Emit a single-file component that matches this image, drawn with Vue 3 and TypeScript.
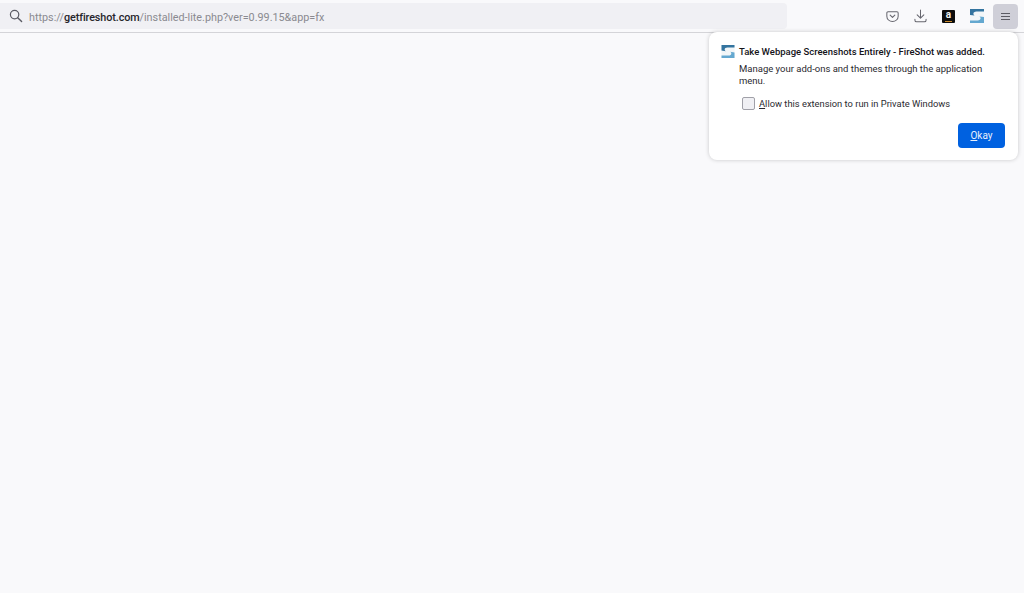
<script setup lang="ts">
const urlHost = 'getfireshot.com'
const urlPath = '/installed-lite.php?ver=0.99.15&app=fx'
</script>

<template>
  <div class="browser">
    <header class="toolbar">
      <div class="urlbar">
        <svg class="search-icon" width="14" height="14" viewBox="0 0 14 14" fill="none">
          <circle cx="5.6" cy="5.6" r="4.2" stroke="#5b5b64" stroke-width="1.2" />
          <path d="M8.7 8.7 L12.6 12.6" stroke="#5b5b64" stroke-width="1.4" stroke-linecap="round" />
        </svg>
        <span class="url"><span class="url-dim">https://</span><span class="url-host">{{ urlHost }}</span><span class="url-dim">{{ urlPath }}</span></span>
      </div>
      <div class="actions">
        <svg class="tool pocket" width="13" height="13" viewBox="0 0 14 14" fill="none">
          <path d="M2.2 1.8 H11.8 A1.3 1.3 0 0 1 13.1 3.1 V6.6 A6.1 5.9 0 0 1 0.9 6.6 V3.1 A1.3 1.3 0 0 1 2.2 1.8 Z" stroke="#66666e" stroke-width="1.1" />
          <path d="M4.5 5.6 L7 8 L9.5 5.6" stroke="#66666e" stroke-width="1.2" stroke-linecap="round" stroke-linejoin="round" />
        </svg>
        <svg class="tool download" width="13" height="14" viewBox="0 0 14 15" fill="none">
          <path d="M7 1 V9.6 M3.4 6.2 L7 9.8 L10.6 6.2" stroke="#66666e" stroke-width="1.1" stroke-linecap="round" stroke-linejoin="round" />
          <path d="M1 11 V12 A1.8 1.8 0 0 0 2.8 13.8 H11.2 A1.8 1.8 0 0 0 13 12 V11" stroke="#66666e" stroke-width="1.1" stroke-linecap="round" />
        </svg>
        <div class="tool amazon">
          <span class="amazon-a">a</span>
          <span class="amazon-smile"></span>
        </div>
        <svg class="tool fireshot" width="14" height="14" viewBox="0 0 14 14">
          <rect width="14" height="14" fill="#f2f6f8" />
          <path d="M0 0 H14 V2.6 H6.5 C4.4 2.6 3.4 3.6 3.4 4.8 C3.4 5.6 3.8 6.2 4.6 6.6 L0 6 Z" fill="#33749f" />
          <path d="M14 14 H0 V11.4 H7.5 C9.6 11.4 10.6 10.4 10.6 9.2 C10.6 8.4 10.2 7.8 9.4 7.4 L14 8 Z" fill="#64a8d0" />
        </svg>
        <div class="menu-btn">
          <span></span>
          <span></span>
          <span></span>
        </div>
      </div>
    </header>

    <section class="panel">
      <div class="panel-title">
        <svg class="panel-icon" width="14" height="13" viewBox="0 0 14 14">
          <rect width="14" height="14" fill="#f2f6f8" />
          <path d="M0 0 H14 V2.6 H6.5 C4.4 2.6 3.4 3.6 3.4 4.8 C3.4 5.6 3.8 6.2 4.6 6.6 L0 6 Z" fill="#33749f" />
          <path d="M14 14 H0 V11.4 H7.5 C9.6 11.4 10.6 10.4 10.6 9.2 C10.6 8.4 10.2 7.8 9.4 7.4 L14 8 Z" fill="#64a8d0" />
        </svg>
        <strong>Take Webpage Screenshots Entirely - FireShot was added.</strong>
      </div>
      <p class="panel-text">Manage your add-ons and themes through the application menu.</p>
      <label class="panel-check">
        <span class="box"></span>
        <span><u>A</u>llow this extension to run in Private Windows</span>
      </label>
      <div class="panel-actions">
        <button class="okay" type="button"><u>O</u>kay</button>
      </div>
    </section>
  </div>
</template>

<style>
html,
body {
  margin: 0;
  background: #f9f9fb;
}
</style>

<style scoped>
.browser {
  position: relative;
  height: 593px;
  overflow: hidden;
  background: #f9f9fb;
  font-family: Roboto, "Noto Sans", sans-serif;
  color: #15141a;
}

.toolbar {
  display: flex;
  align-items: center;
  height: 32px;
  padding-right: 6px;
  background: #f9f9fb;
  border-bottom: 1px solid #d4d4d8;
}

.urlbar {
  display: flex;
  align-items: center;
  width: 787px;
  height: 26px;
  padding-left: 9px;
  box-sizing: border-box;
  background: #f0f0f4;
  border-radius: 0 4px 4px 0;
}

.search-icon {
  flex: 0 0 auto;
}

.url {
  margin-left: 6px;
  padding-top: 2px;
  font-size: 10.8px;
  white-space: nowrap;
}

.url-dim {
  color: #8a8a90;
}

.url-host {
  color: #26252b;
  font-weight: 500;
  letter-spacing: -0.1px;
}

.actions {
  display: flex;
  align-items: center;
  margin-left: auto;
}

.tool {
  display: block;
  flex: 0 0 auto;
}

.pocket {
  margin-right: 15px;
}

.download {
  margin-right: 15px;
}

.amazon {
  position: relative;
  width: 13px;
  height: 13px;
  margin-right: 15px;
  background: #0d0d0d;
  border-radius: 1px;
  text-align: center;
}

.amazon-a {
  display: block;
  color: #f2f2f2;
  font-size: 10px;
  font-weight: 700;
  line-height: 10px;
}

.amazon-smile {
  position: absolute;
  left: 3px;
  bottom: 1px;
  width: 7px;
  height: 1px;
  background: #c98a2e;
}

.fireshot {
  margin-right: 9px;
}

.menu-btn {
  display: flex;
  flex-direction: column;
  align-items: center;
  justify-content: center;
  gap: 2px;
  width: 25px;
  height: 25px;
  background: #cfcfd8;
  border-radius: 4px;
}

.menu-btn span {
  width: 9px;
  height: 1px;
  background: #5b5b64;
}

.panel {
  position: absolute;
  top: 32px;
  left: 709px;
  box-sizing: border-box;
  width: 309px;
  height: 128px;
  padding: 13px 13px 0 12px;
  background: #fff;
  border-radius: 8px;
  box-shadow: 0 0 4px rgba(0, 0, 0, 0.2);
  font-size: 9.5px;
}

.panel-title {
  display: flex;
  align-items: center;
  gap: 4px;
  line-height: 13px;
}

.panel-title strong {
  font-weight: 500;
  white-space: nowrap;
}

.panel-icon {
  flex: 0 0 auto;
}

.panel-text {
  width: 255px;
  margin: 5px 0 0 18px;
  line-height: 12px;
  color: #2b2a30;
}

.panel-check {
  display: flex;
  align-items: center;
  gap: 4px;
  margin: 10px 0 0 21px;
  line-height: 13px;
  font-size: 9.35px;
  color: #2b2a30;
}

.box {
  width: 11px;
  height: 11px;
  background: #f0f0f4;
  border: 1px solid #a0a0a8;
  border-radius: 2px;
}

.panel-actions {
  display: flex;
  justify-content: flex-end;
  margin-top: 13px;
}

.okay {
  width: 47px;
  height: 25px;
  padding: 0;
  background: #0061e0;
  border: 0;
  border-radius: 4px;
  color: #e8f0fc;
  font: inherit;
  font-size: 10px;
}
</style>
